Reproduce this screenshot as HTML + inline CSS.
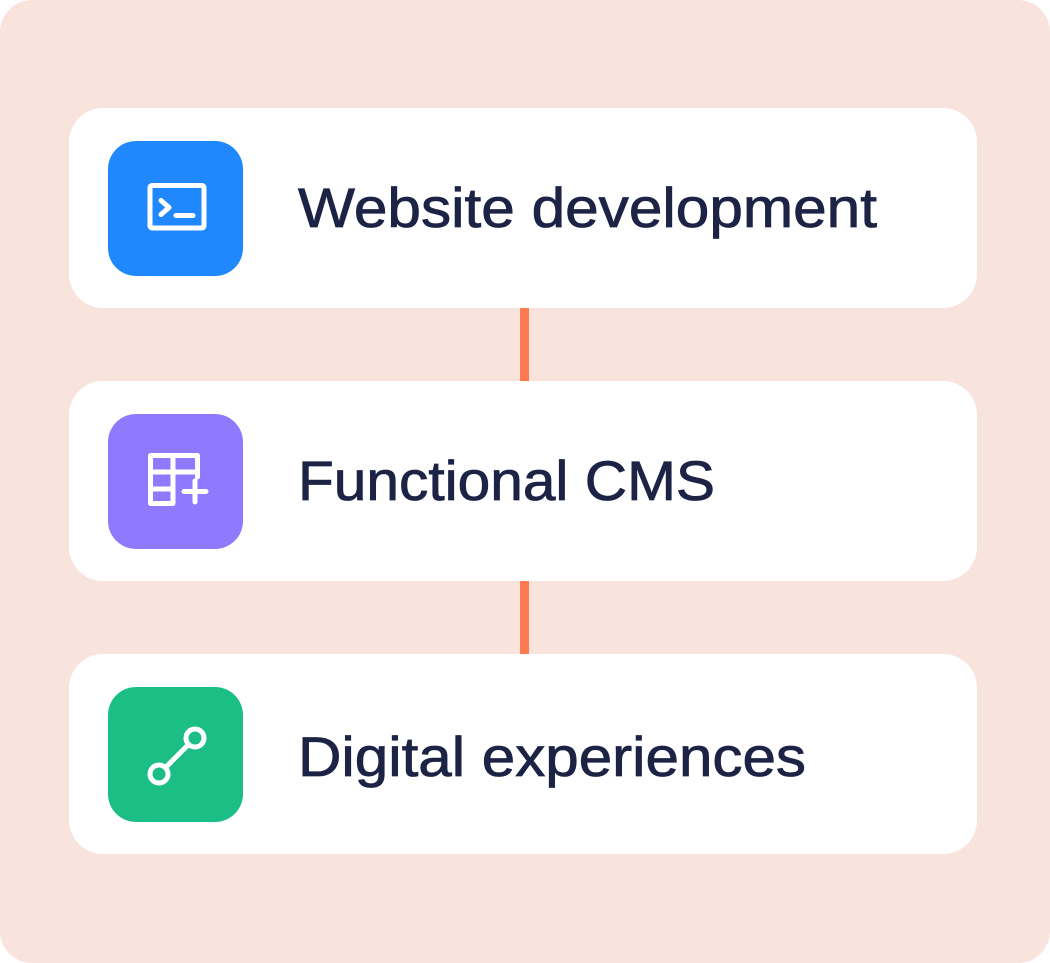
<!DOCTYPE html>
<html><head><style>
html,body{margin:0;padding:0;background:#fff;}
</style></head><body>
<svg width="1050" height="963" viewBox="0 0 1050 963" xmlns="http://www.w3.org/2000/svg" style="display:block">
<rect x="0" y="0" width="1050" height="963" rx="32" fill="#f9e4dd"/>
<rect x="520" y="300" width="9" height="90" fill="#ff7a50"/>
<rect x="520" y="573" width="9" height="90" fill="#ff7a50"/>
<rect x="69" y="108" width="908" height="200" rx="34" fill="#fff"/>
<rect x="69" y="381" width="908" height="200" rx="34" fill="#fff"/>
<rect x="69" y="654" width="908" height="200" rx="34" fill="#fff"/>
<rect x="108" y="141" width="135" height="135" rx="28" fill="#1f88ff"/>
<rect x="108" y="414" width="135" height="135" rx="28" fill="#8f79ff"/>
<rect x="108" y="687" width="135" height="135" rx="28" fill="#1bbe84"/>
<g fill="none" stroke="#fff" stroke-width="5" stroke-linecap="round" stroke-linejoin="round">
<rect x="150" y="185.5" width="54" height="42.5" rx="2"/>
<path d="M161 200.5L169 207.5L161 214.5M176 215.5H193"/>
<path d="M150.5 455.5H197.5V477M150.5 455.5V503.5H173M150.5 472H197.5M150.5 489H173M173 455.5V503.5M184 491.5H206M195 481V502"/>
<circle cx="159" cy="774" r="9"/>
<circle cx="195" cy="738" r="9"/>
<path d="M165.5 767.5L188.5 744.5"/>
</g>
<g font-family="Liberation Sans, sans-serif" font-size="56" fill="#1c2345" stroke="#1c2345" stroke-width="0.8">
<text x="298" y="227" textLength="579" lengthAdjust="spacingAndGlyphs">Website development</text>
<text x="298" y="500" textLength="417" lengthAdjust="spacingAndGlyphs">Functional CMS</text>
<text x="298" y="776" textLength="508" lengthAdjust="spacingAndGlyphs">Digital experiences</text>
</g>
</svg>
</body></html>
